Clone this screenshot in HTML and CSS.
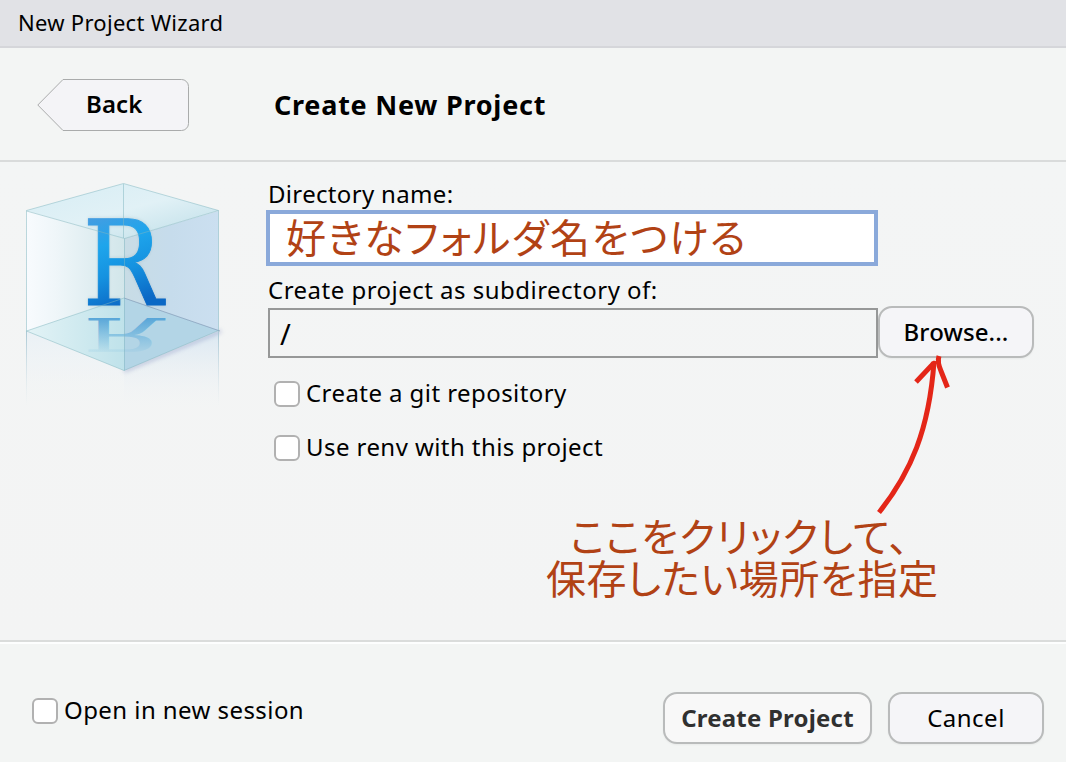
FILE: index.html
```html
<!DOCTYPE html>
<html lang="ja">
<head>
<meta charset="utf-8">
<title>New Project Wizard</title>
<link rel="stylesheet" href="styles.css">
</head>
<body>
<div class="dialog">
  <div class="titlebar"><span class="t-title">New Project Wizard</span></div>
  <header class="header">
    <button class="back">
      <svg class="back-shape" width="153" height="53" viewBox="0 0 153 53"><path d="M26 .5H144.500a7 7 0 0 1 7 7V44.500a7 7 0 0 1-7 7H26L.8 26Z" fill="#f4f4f7" stroke="#a9abab"/></svg>
      <span class="t-back">Back</span>
    </button>
    <h1 class="t-head">Create New Project</h1>
  </header>
  <main class="content">
    <svg class="logo" width="240" height="260" viewBox="0 162 240 260">
      <defs>
        <linearGradient id="left" x1="0" x2="1"><stop offset="0" stop-color="#f8fbfe"/><stop offset=".3" stop-color="#eff6f9"/><stop offset="1" stop-color="#d2e6ea"/></linearGradient>
        <linearGradient id="right" x1="0" x2="1"><stop offset="0" stop-color="#c8dce5"/><stop offset=".5" stop-color="#c6dcec"/><stop offset="1" stop-color="#cbdff0"/></linearGradient>
        <linearGradient id="top" x1="0" x2="1" y1="0" y2="1"><stop offset="0" stop-color="#d6edf4"/><stop offset=".5" stop-color="#e1f1f6"/><stop offset="1" stop-color="#bcdde7"/></linearGradient>
        <linearGradient id="floorL" x1="0" x2="1"><stop offset="0" stop-color="#e3f3f6"/><stop offset="1" stop-color="#bfe2ea"/></linearGradient>
        <linearGradient id="fade" x1="0" x2="0" y1="0" y2="1"><stop offset="0" stop-color="#d5e5f2" stop-opacity=".85"/><stop offset="1" stop-color="#f3f5f5" stop-opacity="0"/></linearGradient>
        <linearGradient id="fadeL" x1="0" x2="0" y1="0" y2="1"><stop offset="0" stop-color="#eaf1f6"/><stop offset="1" stop-color="#f3f5f5" stop-opacity="0"/></linearGradient>
        <linearGradient id="edge" gradientUnits="userSpaceOnUse" x1="0" x2="0" y1="331" y2="406"><stop offset="0" stop-color="#aac8d4"/><stop offset="1" stop-color="#d5e2e8" stop-opacity="0"/></linearGradient>
        <linearGradient id="blue" gradientUnits="userSpaceOnUse" x1="20" x2="50" y1="-95" y2="0"><stop offset="0" stop-color="#4a9ce0"/><stop offset=".35" stop-color="#1ea5ec"/><stop offset=".65" stop-color="#1592e0"/><stop offset="1" stop-color="#0b68c5"/></linearGradient>
        <linearGradient id="mirror" gradientUnits="userSpaceOnUse" x1="0" x2="0" y1="-86" y2="0"><stop offset="0" stop-color="#5fb0dc" stop-opacity=".1"/><stop offset="1" stop-color="#57a5d8"/></linearGradient>
        <filter id="soft" x="-20%" y="-20%" width="140%" height="140%"><feGaussianBlur stdDeviation="2"/></filter>
      </defs>
      <path d="M26 331 124 370.500V412L26 408Z" fill="url(#fadeL)"/>
      <path d="M219 331 124 370.500V412L219 408Z" fill="url(#fade)"/>
      <path d="M124 371 221 331" stroke="#8792c0" stroke-width="3" opacity=".5" filter="url(#soft)"/>
      <path d="M26.500 331V406M218.500 331V406" stroke="url(#edge)"/>
      <path d="M26.500 211 124 238.500V298L26.500 331Z" fill="url(#left)"/>
      <path d="M218.500 211 124 238.500V298L218.500 330.500Z" fill="url(#right)"/>
      <path d="M123.500 183.500 218.500 210.500 124 238.500 26.500 210.500Z" fill="url(#top)"/>
      <path d="M124 298 26.500 331 124 370.500Z" fill="url(#floorL)"/>
      <path d="M124 298 218.500 330.500 124 370.500Z" fill="#b3d5e6"/>
      <path d="M124 298 220 331" stroke="#718cad" opacity=".6"/>
      <text class="logo-r" transform="translate(82.500 305.300) scale(.9 1)" fill="#607d8c" opacity=".3" filter="url(#soft)">R</text>
      <text class="logo-r" transform="translate(82.500 305.300) scale(.9 1)" fill="url(#blue)" stroke="url(#blue)">R</text>
      <text class="logo-r" transform="translate(82.500 317.500) scale(.9 -.4)" fill="url(#mirror)">R</text>
      <path d="M26.500 331V210.500L123.500 183.500 218.500 210.500V330.500L124 370.500 26.500 331 124 298M26.500 211 124.500 238.500 218.500 210.500M124.500 238.500V370.500M123.500 184V238" fill="none" stroke="#7fb5bf" stroke-opacity=".5"/>
    </svg>
    <form class="form">
      <label class="t-dir">Directory name:</label>
      <div class="name-field"><span class="note note-name">好きなフォルダ名をつける</span></div>
      <label class="t-sub">Create project as subdirectory of:</label>
      <div class="path-row">
        <div class="path-field">/</div>
        <button type="button" class="button browse"><span class="t-browse">Browse...</span></button>
      </div>
      <div class="check git"><i class="box"></i><span class="t-git">Create a git repository</span></div>
      <div class="check renv"><i class="box"></i><span class="t-renv">Use renv with this project</span></div>
    </form>
    <svg class="arrow" width="100" height="180" viewBox="860 340 100 180" fill="none" stroke="#e42618" stroke-width="5">
      <path d="M879 512.500C911 472 929 430 934 362"/>
      <path d="M916 382 932 365Q934 362 936 364" />
      <path d="M939 356Q937 362 941 371L947.500 387.500"/>
    </svg>
    <p class="note note-browse"><span class="n1">ここをクリックして、</span><span class="n2">保存したい場所を指定</span></p>
  </main>
  <footer class="footer">
    <div class="check"><i class="box"></i><span class="t-open">Open in new session</span></div>
    <div class="actions">
      <button class="button create"><span class="t-create">Create Project</span></button>
      <button class="button cancel"><span class="t-cancel">Cancel</span></button>
    </div>
  </footer>
</div>
</body>
</html>
```

FILE: styles.css
```css
* { box-sizing: border-box; }
body { margin: 0; background: #f3f5f4; color: #000; font-family: "Noto Sans", "Open Sans", sans-serif; font-size: 24px; line-height: 32px; letter-spacing: .43px; }
.dialog { width: 1066px; height: 762px; display: flex; flex-direction: column; overflow: hidden; }
button { font: inherit; color: inherit; letter-spacing: inherit; padding: 0; border: 0; background: none; }
span, label { white-space: nowrap; }

.titlebar { height: 48px; padding: 6px 0 0 18px; background: #e1e2e6; border-bottom: 2px solid #d5d6da; font-size: 22px; letter-spacing: .28px; }
.header { height: 114px; padding: 31px 0 0 37px; display: flex; border-bottom: 2px solid #d9dbdb; }
.back { position: relative; width: 153px; height: 53px; display: flex; padding: 9px 0 0 49px; font-weight: 600; letter-spacing: .1px; }
.back-shape { position: absolute; left: 0; top: 0; }
.back span { position: relative; }
h1 { margin: 10px 0 0 84px; font-size: 27px; font-weight: 700; line-height: 32px; letter-spacing: .75px; white-space: nowrap; }

.content { position: relative; height: 478px; display: flex; background: linear-gradient(#f3f5f5, #f3f4f4); }
.logo { width: 240px; height: 260px; flex: none; }
.form { padding: 16px 0 0 26px; display: flex; flex-direction: column; }
.name-field { width: 612px; height: 56px; margin: 0 0 8px; border: 4px solid #8aa9da; background: #fff; padding: 0 0 4px 16px; display: flex; align-items: center; }
.form label { margin-left: 2px; height: 32px; }
.t-dir { letter-spacing: .33px; }
.form .t-sub { height: 32px; letter-spacing: .48px; }
.path-row { display: flex; align-items: flex-start; }
.path-field { width: 610px; height: 50px; margin: 2px 0 0 2px; border: 2px solid #969898; padding: 8px 0 0 10px; font-size: 29px; }
.button { border: 2px solid #b9bbbb; border-radius: 14px; background: #f5f5f8; height: 52px; box-shadow: 0 1px 2px #0000000c; display: flex; align-items: center; justify-content: center; }
.browse { width: 156px; font-weight: 500; letter-spacing: .1px; }
.check { display: flex; align-items: center; gap: 6px; }
.check span { height: 34px; }
.box { width: 26px; height: 26px; flex: none; border: 2px solid #b1b1b1; border-radius: 6px; background: #fff; }
.git { margin: 19px 0 0 8px; }
.renv { margin: 20px 0 0 8px; }

.note { color: #b14215; font-family: "Noto Sans CJK JP", sans-serif; font-size: 40px; line-height: 40px; font-feature-settings: "palt"; }
.note-name { letter-spacing: 1.6px; }
.note-browse { position: absolute; left: 546px; top: 352px; width: 396px; margin: 0; display: flex; flex-direction: column; align-items: flex-start; line-height: 42px; }
.n1 { margin-left: 24px; letter-spacing: 1px; }
.n2 { letter-spacing: .6px; }
.arrow { position: absolute; left: 860px; top: 178px; }

.footer { flex: 1; display: flex; justify-content: space-between; align-items: flex-start; padding: 50px 22px 0 32px; border-top: 2px solid #dadcdb; box-shadow: inset 0 2px #fdfefe; }
.footer .check { margin-top: 2px; }
.actions { display: flex; gap: 16px; }
.create { width: 209px; font-weight: 700; color: #303030; background: #f8f8f8; letter-spacing: .2px; }
.cancel { width: 156px; letter-spacing: .5px; }
.logo-r { font-family: "DejaVu Serif", serif; font-size: 118.5px; letter-spacing: 0; stroke-width: 1px; }
```
